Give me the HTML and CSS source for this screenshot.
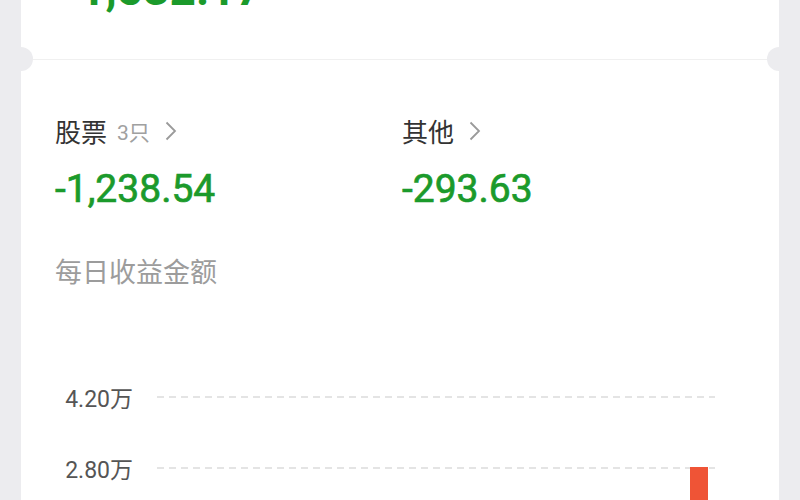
FILE: index.html
```html
<!DOCTYPE html>
<html lang="zh-CN">
<head>
<meta charset="utf-8">
<title>收益</title>
<link rel="stylesheet" href="styles.css">
</head>
<body>
<div class="card">
  <div class="summary"><div class="total">-1,532.17</div></div>
  <div class="divider"></div>
  <div class="cats">
    <div class="cat">
      <div class="cat-head">
        <span class="name">股票</span><span class="count">3只</span>
        <svg class="chev" width="14" height="22" viewBox="0 0 14 22"><path d="M2.5 2.5 L11 11 L2.5 19.5" fill="none" stroke="#9a9a9a" stroke-width="1.8"/></svg>
      </div>
      <div class="val">-1,238.54</div>
    </div>
    <div class="cat">
      <div class="cat-head">
        <span class="name">其他</span>
        <svg class="chev" width="14" height="22" viewBox="0 0 14 22"><path d="M2.5 2.5 L11 11 L2.5 19.5" fill="none" stroke="#9a9a9a" stroke-width="1.8"/></svg>
      </div>
      <div class="val">-293.63</div>
    </div>
  </div>
  <div class="chart-title">每日收益金额</div>
  <div class="chart">
    <div class="row"><span class="ylabel">4.20万</span><span class="grid-line"></span></div>
    <div class="row"><span class="ylabel">2.80万</span><span class="grid-line"></span></div>
    <div class="bar"></div>
  </div>
</div>
</body>
</html>
```
FILE: styles.css
```css
html, body {
  margin: 0;
  padding: 0;
  background: #ececef;
  overflow: hidden;
  height: 500px;
}
.card {
  margin: 0 21px;
  background: #fff;
  height: 500px;
  overflow: hidden;
  font-family: "Noto Sans CJK SC", "Noto Sans", sans-serif;
}
.summary {
  display: flow-root;
  height: 59px;
  padding-left: 40px;
}
.total {
  margin-top: -34px;
  font-family: "Liberation Sans Narrow", "Roboto", sans-serif;
  font-weight: 700;
  font-size: 46px;
  line-height: 46px;
  color: #1b9a2b;
}
.divider {
  position: relative;
  height: 1px;
  background: #f0f0f0;
  margin: 0 12px;
}
.divider::before, .divider::after {
  content: "";
  position: absolute;
  top: -12px;
  width: 24px;
  height: 24px;
  border-radius: 50%;
  background: #ececef;
}
.divider::before { left: -24px; }
.divider::after { right: -24px; }
.cats {
  display: grid;
  grid-template-columns: 347px 1fr;
  padding: 55px 34px 0;
}
.cat-head {
  display: flex;
  align-items: center;
  height: 32px;
}
.name {
  font-size: 26px;
  line-height: 32px;
  color: #333;
}
.count {
  font-family: "Roboto", "Noto Sans CJK SC", sans-serif;
  font-size: 21px;
  color: #a0a0a0;
  margin-left: 10px;
}
.chev {
  margin-left: 14px;
}
.val {
  margin-top: 20px;
  font-family: "Liberation Sans Narrow", "Roboto", sans-serif;
  font-size: 39px;
  line-height: 44px;
  color: #1b9a2b;
  -webkit-text-stroke: 0.7px #1b9a2b;
}
.chart-title {
  margin-top: 42px;
  padding-left: 34px;
  font-size: 27px;
  line-height: 36px;
  color: #9c9c9c;
}
.chart {
  position: relative;
  margin-top: 72px;
  padding: 0 64px 0 34px;
}
.row {
  display: flex;
  align-items: center;
  height: 71px;
}
.ylabel {
  width: 78px;
  text-align: right;
  font-family: "Roboto", "Noto Sans CJK SC", sans-serif;
  font-size: 23px;
  color: #555;
}
.grid-line {
  flex: 1;
  margin-left: 24px;
  height: 2px;
  background: repeating-linear-gradient(90deg, #e4e4e4 0 7px, transparent 7px 12px);
}
.bar {
  position: absolute;
  left: 669px;
  top: 106px;
  width: 18px;
  height: 33px;
  background: #ef5436;
}
```
